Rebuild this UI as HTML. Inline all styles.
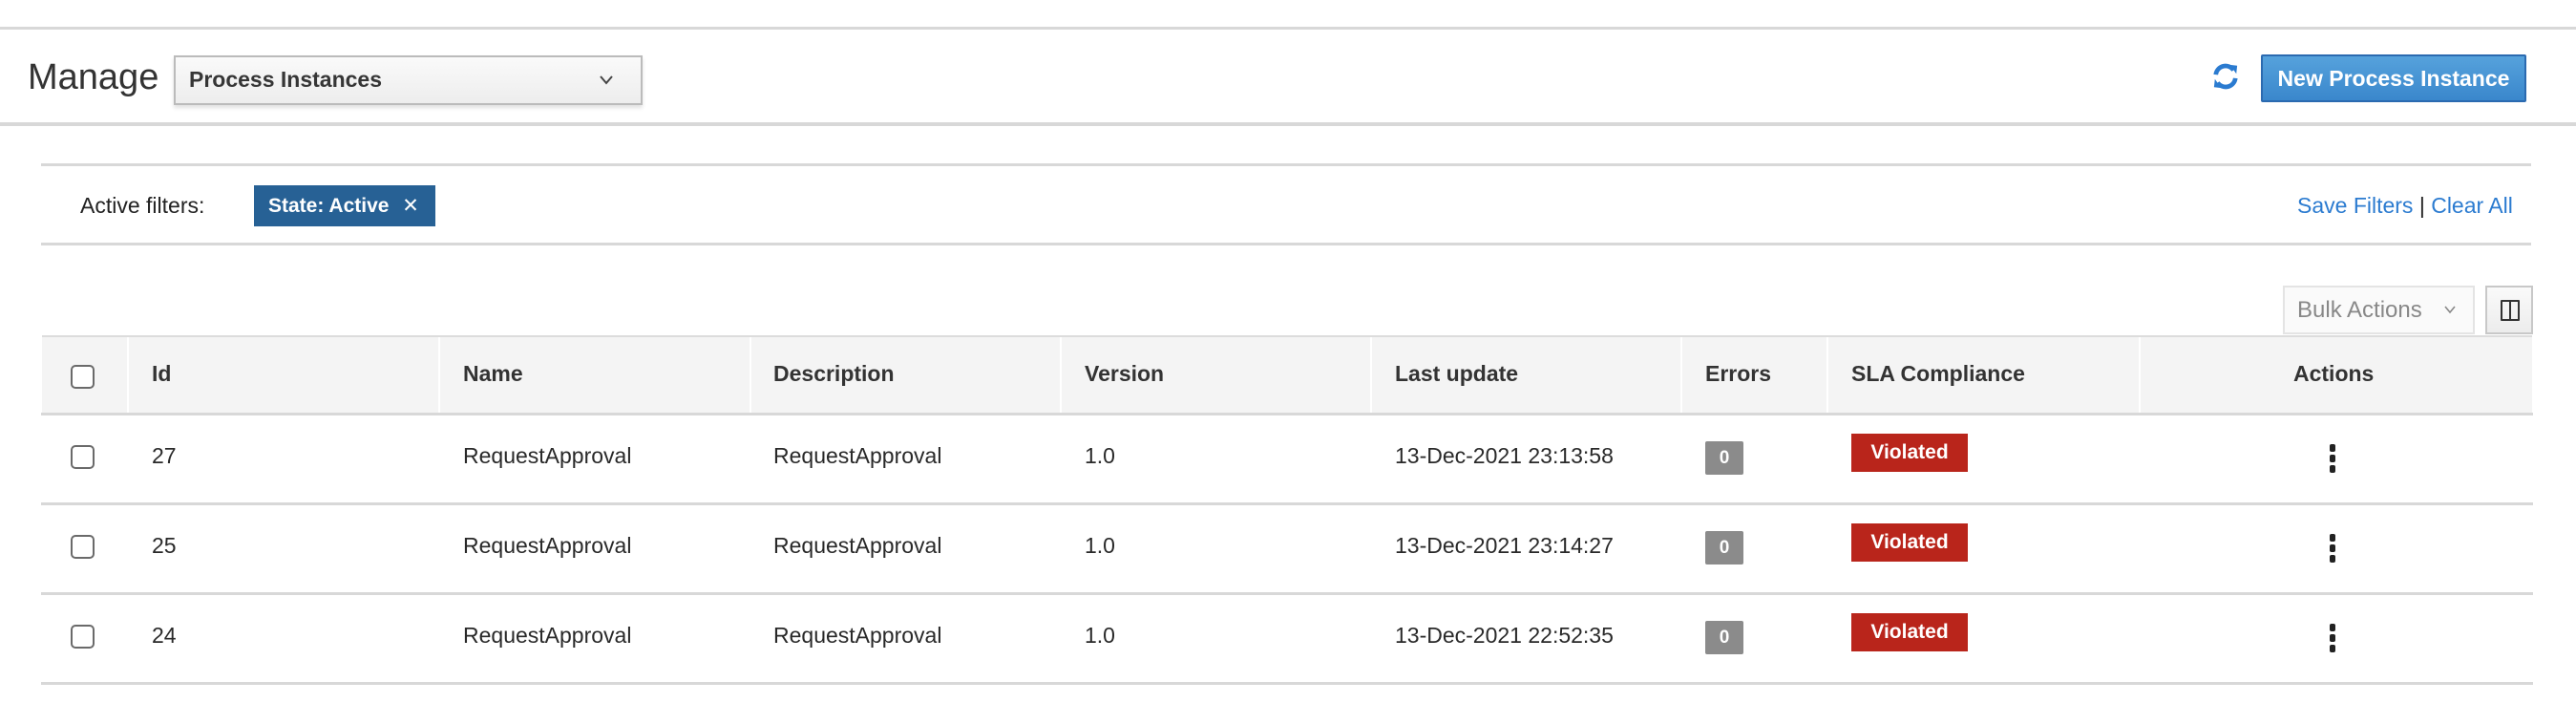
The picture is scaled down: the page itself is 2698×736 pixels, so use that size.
<!DOCTYPE html>
<html><head><meta charset="utf-8"><style>
*{box-sizing:border-box;margin:0;padding:0}
body{width:2698px;height:736px;background:#fff;font-family:"Liberation Sans",sans-serif;color:#292929;position:relative;overflow:hidden}
.a{position:absolute}
.hl{position:absolute;height:3px;background:#d8d8d8}
.t{position:absolute;font-size:23px;white-space:nowrap;line-height:1}
.cb{position:absolute;width:25px;height:25px;border:2px solid #6a6a6a;border-radius:5px;background:#fff}
.vd{position:absolute;width:2px;background:#fff}
.zero{position:absolute;width:40px;height:35px;background:#8b8b8b;border-radius:2px;color:#fff;font-size:19px;font-weight:bold;text-align:center;line-height:35px}
.vio{position:absolute;width:122px;height:40px;background:#b9251b;color:#fff;font-size:21px;font-weight:bold;text-align:center;line-height:40px}
.keb{position:absolute;width:6px}
.keb i{display:block;width:6px;height:8px;background:#222;border-radius:2px;margin-bottom:3px}
</style></head><body>
<div class="hl" style="top:28px;left:0;width:2698px"></div>
<div class="t" style="left:29px;top:62px;font-size:38px;color:#333">Manage</div>
<div class="a" style="left:182px;top:58px;width:491px;height:52px;border:2px solid #bbb;background:linear-gradient(#fafafa,#ededed);box-shadow:0 3px 4px rgba(0,0,0,.12)"></div>
<div class="t" style="left:198px;top:72px;font-size:23px;font-weight:bold;color:#363636">Process Instances</div>
<svg class="a" style="left:628px;top:79px" width="14" height="10" viewBox="0 0 14 10"><path d="M1 1l6 7 6-7" fill="none" stroke="#444" stroke-width="2"/></svg>
<svg class="a" style="left:2317px;top:65px" width="28" height="30" viewBox="0 0 30 30"><path d="M4 13A11 11 0 0 1 24 8" fill="none" stroke="#2b7bd0" stroke-width="5"/><path d="M20 2l8 1-1 9z" fill="#2b7bd0"/><path d="M26 17A11 11 0 0 1 6 22" fill="none" stroke="#2b7bd0" stroke-width="5"/><path d="M10 28l-8-1 1-9z" fill="#2b7bd0"/></svg>
<div class="a" style="left:2368px;top:57px;width:278px;height:50px;background:linear-gradient(#56a2dc,#3a87cc);border:2px solid #2b6ab0;border-radius:2px;color:#fff;font-size:23px;font-weight:bold;text-align:center;line-height:46px">New Process Instance</div>
<div class="hl" style="top:128px;left:0;width:2698px;height:4px"></div>
<div class="hl" style="top:171px;left:43px;width:2608px"></div>
<div class="t" style="left:84px;top:204px;font-size:23px;color:#222">Active filters:</div>
<div class="a" style="left:266px;top:194px;width:190px;height:43px;background:#276195;color:#fff;font-size:21px;font-weight:bold;line-height:43px;padding-left:15px">State: Active <span style="margin-left:8px;font-weight:normal">✕</span></div>
<div class="t" style="left:2406px;top:204px;color:#2b7bd0">Save Filters <span style="color:#222">|</span> Clear All</div>
<div class="hl" style="top:254px;left:43px;width:2608px"></div>
<div class="a" style="left:2391px;top:299px;width:201px;height:51px;border:2px solid #e4e4e4;background:#fafafa"></div>
<div class="t" style="left:2406px;top:313px;color:#888;font-size:24px">Bulk Actions</div>
<svg class="a" style="left:2560px;top:320px" width="12" height="9" viewBox="0 0 12 9"><path d="M1 1l5 6 5-6" fill="none" stroke="#888" stroke-width="1.6"/></svg>
<div class="a" style="left:2603px;top:299px;width:50px;height:51px;border:2px solid #c8c8c8;background:linear-gradient(#fafafa,#ececec)"></div>
<div class="a" style="left:2619px;top:314px;width:20px;height:22px;border:2px solid #333;border-radius:1px"></div>
<div class="a" style="left:2628px;top:314px;width:2px;height:22px;background:#333"></div>
<div class="a" style="left:44px;top:351px;width:2608px;height:81px;background:#f4f4f4;border-top:2px solid #dcdcdc"></div>
<div class="vd" style="left:133px;top:353px;height:79px"></div>
<div class="vd" style="left:459px;top:353px;height:79px"></div>
<div class="vd" style="left:785px;top:353px;height:79px"></div>
<div class="vd" style="left:1110px;top:353px;height:79px"></div>
<div class="vd" style="left:1435px;top:353px;height:79px"></div>
<div class="vd" style="left:1760px;top:353px;height:79px"></div>
<div class="vd" style="left:1913px;top:353px;height:79px"></div>
<div class="vd" style="left:2240px;top:353px;height:79px"></div>
<div class="cb" style="left:74px;top:382px"></div>
<div class="t" style="left:159px;top:380px;font-weight:bold;color:#333">Id</div>
<div class="t" style="left:485px;top:380px;font-weight:bold;color:#333">Name</div>
<div class="t" style="left:810px;top:380px;font-weight:bold;color:#333">Description</div>
<div class="t" style="left:1136px;top:380px;font-weight:bold;color:#333">Version</div>
<div class="t" style="left:1461px;top:380px;font-weight:bold;color:#333">Last update</div>
<div class="t" style="left:1786px;top:380px;font-weight:bold;color:#333">Errors</div>
<div class="t" style="left:1939px;top:380px;font-weight:bold;color:#333">SLA Compliance</div>
<div class="t" style="left:2402px;top:380px;font-weight:bold;color:#333">Actions</div>
<div class="hl" style="top:432px;left:43px;width:2610px"></div>

<div class="cb" style="left:74px;top:466px"></div>
<div class="t" style="left:159px;top:466px">27</div>
<div class="t" style="left:485px;top:466px">RequestApproval</div>
<div class="t" style="left:810px;top:466px">RequestApproval</div>
<div class="t" style="left:1136px;top:466px">1.0</div>
<div class="t" style="left:1461px;top:466px">13-Dec-2021 23:13:58</div>
<div class="zero" style="left:1786px;top:462px">0</div>
<div class="vio" style="left:1939px;top:454px">Violated</div>
<div class="keb" style="left:2440px;top:465px"><i></i><i></i><i></i></div>
<div class="hl" style="top:526px;left:43px;width:2610px"></div>

<div class="cb" style="left:74px;top:560px"></div>
<div class="t" style="left:159px;top:560px">25</div>
<div class="t" style="left:485px;top:560px">RequestApproval</div>
<div class="t" style="left:810px;top:560px">RequestApproval</div>
<div class="t" style="left:1136px;top:560px">1.0</div>
<div class="t" style="left:1461px;top:560px">13-Dec-2021 23:14:27</div>
<div class="zero" style="left:1786px;top:556px">0</div>
<div class="vio" style="left:1939px;top:548px">Violated</div>
<div class="keb" style="left:2440px;top:559px"><i></i><i></i><i></i></div>
<div class="hl" style="top:620px;left:43px;width:2610px"></div>

<div class="cb" style="left:74px;top:654px"></div>
<div class="t" style="left:159px;top:654px">24</div>
<div class="t" style="left:485px;top:654px">RequestApproval</div>
<div class="t" style="left:810px;top:654px">RequestApproval</div>
<div class="t" style="left:1136px;top:654px">1.0</div>
<div class="t" style="left:1461px;top:654px">13-Dec-2021 22:52:35</div>
<div class="zero" style="left:1786px;top:650px">0</div>
<div class="vio" style="left:1939px;top:642px">Violated</div>
<div class="keb" style="left:2440px;top:653px"><i></i><i></i><i></i></div>
<div class="hl" style="top:714px;left:43px;width:2610px"></div>
</body></html>
